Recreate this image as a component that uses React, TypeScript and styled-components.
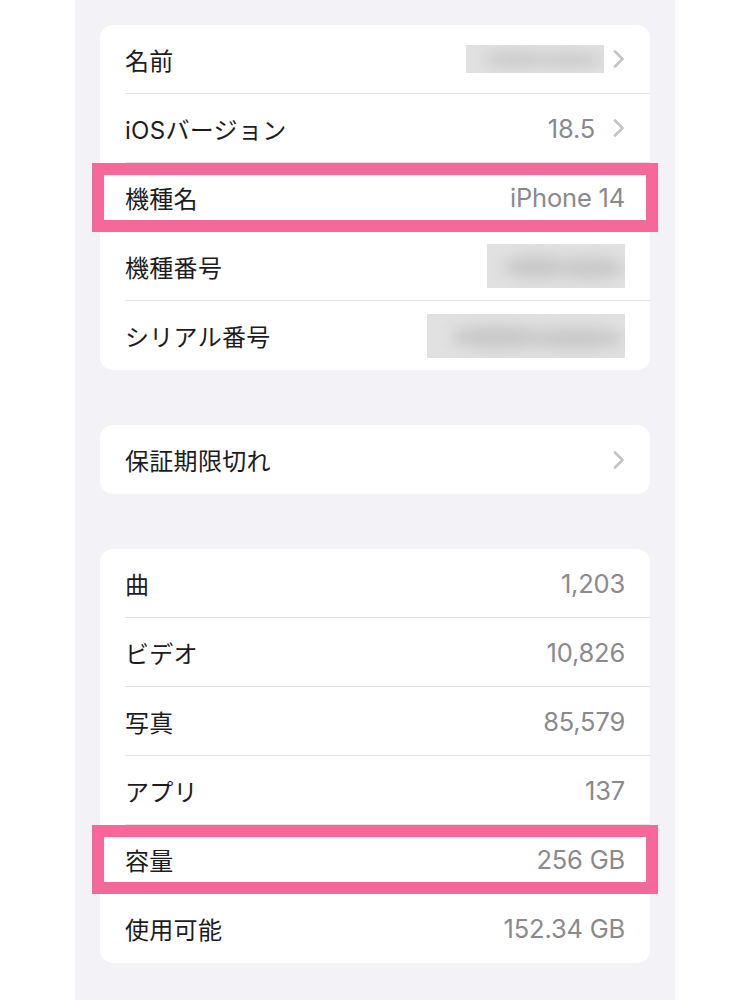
import React from "react";
import styled, { createGlobalStyle } from "styled-components";

const GlobalStyle = createGlobalStyle`
  html, body { margin: 0; padding: 0; background: #ffffff; }
  body { font-family: Inter, "Noto Sans CJK JP", sans-serif; -webkit-font-smoothing: antialiased; }
`;

const Column = styled.div`
  width: 600px;
  min-height: 1000px;
  margin-left: 75px;
  background: #f2f2f7;
  box-sizing: border-box;
  padding: 25px 25px 0;
  display: flex;
  flex-direction: column;
  gap: 55px;
`;

const Card = styled.div`
  background: #ffffff;
  border-radius: 13px;
  display: flex;
  flex-direction: column;
`;

const Row = styled.div`
  position: relative;
  display: flex;
  padding-left: 25px;
`;

const RowInner = styled.div<{ $last?: boolean }>`
  flex: 1;
  height: ${(p) => (p.$last ? 69 : 68)}px;
  display: flex;
  align-items: center;
  justify-content: space-between;
  padding-right: 25px;
  border-bottom: ${(p) => (p.$last ? "none" : "1px solid #e3e3e7")};
`;

const Label = styled.span`
  font-family: Inter, "Noto Sans CJK JP", sans-serif;
  font-size: 24px;
  color: #1c1c1e;
  letter-spacing: 0.3px;
`;

const Right = styled.div`
  display: flex;
  align-items: center;
  gap: 18px;
`;

const Value = styled.span`
  font-family: Inter, "Noto Sans CJK JP", sans-serif;
  font-size: 25.5px;
  color: #8a8a8e;
  letter-spacing: -0.2px;
`;

const Blur = styled.div<{ $w: number; $h: number; $pull: number }>`
  width: ${(p) => p.$w}px;
  height: ${(p) => p.$h}px;
  margin-right: ${(p) => -p.$pull}px;
  background: #e2e1e2;
  position: relative;
  overflow: hidden;
`;

const Blob = styled.div`
  position: absolute;
  background: #c9c9c9;
  border-radius: 50%;
  filter: blur(7px);
`;

const Highlight = styled.div`
  position: absolute;
  left: -8px;
  right: -8px;
  top: 0;
  bottom: 0;
  border: 12px solid #f6689a;
  pointer-events: none;
`;

const Chevron = () => (
  <svg width="12" height="18" viewBox="0 0 12 18" fill="none">
    <path d="M2 1.5 L9.5 9 L2 16.5" stroke="#c4c4c7" strokeWidth="2.6" strokeLinecap="round" strokeLinejoin="round" />
  </svg>
);

type RowData = {
  label: string;
  value?: string;
  blur?: { w: number; h: number };
  chevron?: boolean;
  highlight?: boolean;
};

const card1: RowData[] = [
  { label: "名前", blur: { w: 138, h: 28 }, chevron: true },
  { label: "iOSバージョン", value: "18.5", chevron: true },
  { label: "機種名", value: "iPhone 14", highlight: true },
  { label: "機種番号", blur: { w: 138, h: 44 } },
  { label: "シリアル番号", blur: { w: 198, h: 44 } },
];

const card2: RowData[] = [{ label: "保証期限切れ", chevron: true }];

const card3: RowData[] = [
  { label: "曲", value: "1,203" },
  { label: "ビデオ", value: "10,826" },
  { label: "写真", value: "85,579" },
  { label: "アプリ", value: "137" },
  { label: "容量", value: "256 GB", highlight: true },
  { label: "使用可能", value: "152.34 GB" },
];

const BlurBox = ({ w, h, pull }: { w: number; h: number; pull: number }) => (
  <Blur $w={w} $h={h} $pull={pull}>
    <Blob style={{ left: w * 0.12, top: h * 0.25, width: w * 0.45, height: h * 0.55 }} />
    <Blob style={{ left: w * 0.5, top: h * 0.3, width: w * 0.5, height: h * 0.5 }} />
  </Blur>
);

const List = ({ rows }: { rows: RowData[] }) => (
  <Card>
    {rows.map((r, i) => (
      <Row key={r.label}>
        <RowInner $last={i === rows.length - 1}>
          <Label>{r.label}</Label>
          <Right>
            {r.value && <Value>{r.value}</Value>}
            {r.blur && <BlurBox w={r.blur.w} h={r.blur.h} pull={r.chevron ? 9 : 0} />}
            {r.chevron && <Chevron />}
          </Right>
        </RowInner>
        {r.highlight && <Highlight />}
      </Row>
    ))}
  </Card>
);

export default function App() {
  return (
    <>
      <GlobalStyle />
      <Column>
        <List rows={card1} />
        <List rows={card2} />
        <List rows={card3} />
      </Column>
    </>
  );
}
